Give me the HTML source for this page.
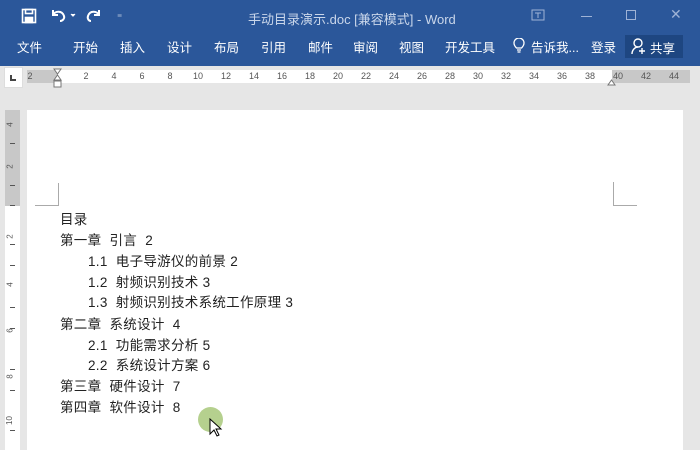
<!DOCTYPE html>
<html><head><meta charset="utf-8"><style>
*{margin:0;padding:0;box-sizing:border-box}
body{width:700px;height:450px;overflow:hidden;background:#e6e6e6;font-family:"Liberation Sans","Noto Sans CJK SC",sans-serif;position:relative}
.top{position:absolute;left:0;top:0;width:700px;height:66px;background:#2b579a}
.t{position:absolute;color:#fff;font-size:12.5px;white-space:nowrap}
.title{position:absolute;top:9px;left:248px;color:#c9d6ea;font-size:13px}
.ruler{position:absolute;left:0;top:66px;width:700px;height:24px;background:#e6e6e6}
.rw{position:absolute;top:4px;height:13px;background:#fff;left:57px;width:555px}
.rg{position:absolute;top:4px;height:13px;background:#c8c8c8}
.n{position:absolute;top:5px;font-size:9px;color:#555;transform:translateX(-50%)}
.page{position:absolute;left:27px;top:110px;width:656px;height:340px;background:#fff}
.vr{position:absolute;left:5px;top:110px;width:15px;height:340px;background:#fff}
.doc{position:absolute;font-size:13.5px;letter-spacing:0.3px;color:#222;white-space:nowrap}
.tk{position:absolute;left:10px;width:5px;height:1px;background:#555}
</style></head><body>
<div class="top">
<svg style="position:absolute;left:21px;top:8px" width="16" height="16" viewBox="0 0 16 16" fill="none" stroke="#fff" stroke-width="1.6"><rect x="1.5" y="1.5" width="13" height="13"/><rect x="4.5" y="1.5" width="7" height="4"/><rect x="4.5" y="9.5" width="7" height="5" fill="#fff"/></svg>
<svg style="position:absolute;left:50px;top:7px" width="28" height="16" viewBox="0 0 28 16" fill="none" stroke="#fff" stroke-width="2"><path d="M3 3v5h5"/><path d="M3 8c2-4 9-5 11 1 1 3-2 5-4 5"/><path d="M21 7l2 2 2-2" stroke-width="1.2" fill="#fff"/></svg>
<svg style="position:absolute;left:84px;top:7px" width="18" height="16" viewBox="0 0 18 16" fill="none" stroke="#fff" stroke-width="2"><path d="M15 3v5h-5"/><path d="M15 8c-2-4-9-5-11 1-1 3 1 5 3 5"/></svg>
<div class="t" style="left:117px;top:9px;font-size:10px">₌</div>
<div class="title">手动目录演示.doc [兼容模式] - Word</div>
<svg style="position:absolute;left:531px;top:9px" width="14" height="12" fill="none" stroke="#9fb3d6"><rect x="1" y="1" width="12" height="10"/><path d="M4 4h6M7 4v5"/></svg>
<div style="position:absolute;left:581px;top:16px;width:11px;height:1px;background:#9fb3d6"></div>
<div style="position:absolute;left:626px;top:10px;width:10px;height:10px;border:1px solid #9fb3d6"></div>
<div class="t" style="left:670px;top:6px;color:#9fb3d6;font-size:14px">✕</div>
<div class="t" style="left:17px;top:37px">文件</div>
<div class="t" style="left:73px;top:37px">开始</div>
<div class="t" style="left:120px;top:37px">插入</div>
<div class="t" style="left:167px;top:37px">设计</div>
<div class="t" style="left:214px;top:37px">布局</div>
<div class="t" style="left:261px;top:37px">引用</div>
<div class="t" style="left:308px;top:37px">邮件</div>
<div class="t" style="left:353px;top:37px">审阅</div>
<div class="t" style="left:399px;top:37px">视图</div>
<div class="t" style="left:445px;top:37px">开发工具</div>
<svg style="position:absolute;left:513px;top:38px" width="12" height="16" fill="none" stroke="#fff" stroke-width="1.3"><path d="M3.5 10c-2-2-2.5-3.5-2.5-5a5 5 0 0 1 10 0c0 1.5-.5 3-2.5 5z"/><path d="M4 12h4M4.5 14h3"/></svg>
<div class="t" style="left:531px;top:37px">告诉我...</div>
<div class="t" style="left:591px;top:37px">登录</div>
<div style="position:absolute;left:625px;top:35px;width:58px;height:23px;background:#1e4681"></div>
<svg style="position:absolute;left:631px;top:38px" width="16" height="17" fill="none" stroke="#fff" stroke-width="1.4"><circle cx="7" cy="5" r="4"/><path d="M1 16c0-4 3-7 6-7"/><path d="M11 10v6M8 13h6"/></svg>
<div class="t" style="left:650px;top:38px">共享</div>
</div>
<div class="ruler">
<div style="position:absolute;left:4px;top:1px;width:19px;height:21px;background:#fff;border:1px solid #ddd"></div>
<div style="position:absolute;left:10px;top:9px;width:6px;height:6px;border-left:2px solid #444;border-bottom:2px solid #444"></div>
<div class="rg" style="left:27px;width:30px"></div>
<div class="rw"></div>
<div class="rg" style="left:612px;width:78px"></div>
<div class="n" style="left:30px">2</div>
<div class="n" style="left:86px">2</div><div class="n" style="left:114px">4</div><div class="n" style="left:142px">6</div><div class="n" style="left:170px">8</div><div class="n" style="left:198px">10</div><div class="n" style="left:226px">12</div><div class="n" style="left:254px">14</div><div class="n" style="left:282px">16</div><div class="n" style="left:310px">18</div><div class="n" style="left:338px">20</div><div class="n" style="left:366px">22</div><div class="n" style="left:394px">24</div><div class="n" style="left:422px">26</div><div class="n" style="left:450px">28</div><div class="n" style="left:478px">30</div><div class="n" style="left:506px">32</div><div class="n" style="left:534px">34</div><div class="n" style="left:562px">36</div><div class="n" style="left:590px">38</div><div class="n" style="left:618px">40</div><div class="n" style="left:646px">42</div><div class="n" style="left:674px">44</div>
<svg style="position:absolute;left:53px;top:2px" width="10" height="22" fill="#fff" stroke="#777"><path d="M1 1h7L4.5 6z"/><path d="M4.5 7L1 12h7z"/><rect x="1" y="13" width="7" height="6"/></svg>
<svg style="position:absolute;left:607px;top:12px" width="10" height="8" fill="#fff" stroke="#777"><path d="M1 7h7L4.5 2z"/></svg>
</div>
<div class="vr"><div style="position:absolute;left:0;top:0;width:15px;height:96px;background:#c8c8c8"></div></div>
<div style="position:absolute;left:0;top:110px;width:20px;height:340px">
<div class="tk" style="top:33px"></div><div class="tk" style="top:75px"></div><div class="tk" style="top:95px"></div><div class="tk" style="top:134px"></div><div class="tk" style="top:155px"></div><div class="tk" style="top:197px"></div><div class="tk" style="top:218px"></div><div class="tk" style="top:259px"></div><div class="tk" style="top:280px"></div><div class="tk" style="top:320px"></div>
</div>
<div style="position:absolute;left:5px;top:110px;width:15px;font-size:8px;color:#555">
<div style="position:absolute;top:10px;left:3px;transform:rotate(-90deg)">4</div>
<div style="position:absolute;top:52px;left:3px;transform:rotate(-90deg)">2</div>
<div style="position:absolute;top:122px;left:3px;transform:rotate(-90deg)">2</div>
<div style="position:absolute;top:170px;left:3px;transform:rotate(-90deg)">4</div>
<div style="position:absolute;top:216px;left:3px;transform:rotate(-90deg)">6</div>
<div style="position:absolute;top:262px;left:3px;transform:rotate(-90deg)">8</div>
<div style="position:absolute;top:306px;left:0px;transform:rotate(-90deg)">10</div>
</div>
<div class="page"></div>
<div style="position:absolute;left:35px;top:183px;width:24px;height:23px;border-right:1px solid #aaa;border-bottom:1px solid #aaa"></div>
<div style="position:absolute;left:613px;top:182px;width:24px;height:24px;border-left:1px solid #aaa;border-bottom:1px solid #aaa"></div>
<div class="doc" style="left:60px;top:208px">目录</div>
<div class="doc" style="left:60px;top:229px">第一章&nbsp; 引言&nbsp; 2</div>
<div class="doc" style="left:88px;top:250px">1.1&nbsp; 电子导游仪的前景 2</div>
<div class="doc" style="left:88px;top:271px">1.2&nbsp; 射频识别技术 3</div>
<div class="doc" style="left:88px;top:291px">1.3&nbsp; 射频识别技术系统工作原理 3</div>
<div class="doc" style="left:60px;top:313px">第二章&nbsp; 系统设计&nbsp; 4</div>
<div class="doc" style="left:88px;top:334px">2.1&nbsp; 功能需求分析 5</div>
<div class="doc" style="left:88px;top:354px">2.2&nbsp; 系统设计方案 6</div>
<div class="doc" style="left:60px;top:375px">第三章&nbsp; 硬件设计&nbsp; 7</div>
<div class="doc" style="left:60px;top:396px">第四章&nbsp; 软件设计&nbsp; 8</div>
<div style="position:absolute;left:198px;top:407px;width:25px;height:25px;border-radius:50%;background:#b5d08e"></div>
<svg style="position:absolute;left:209px;top:418px" width="14" height="20"><path d="M1 1v15l4-4 3 6 2-1-3-6h5z" fill="#fff" stroke="#000"/></svg>
</body></html>
